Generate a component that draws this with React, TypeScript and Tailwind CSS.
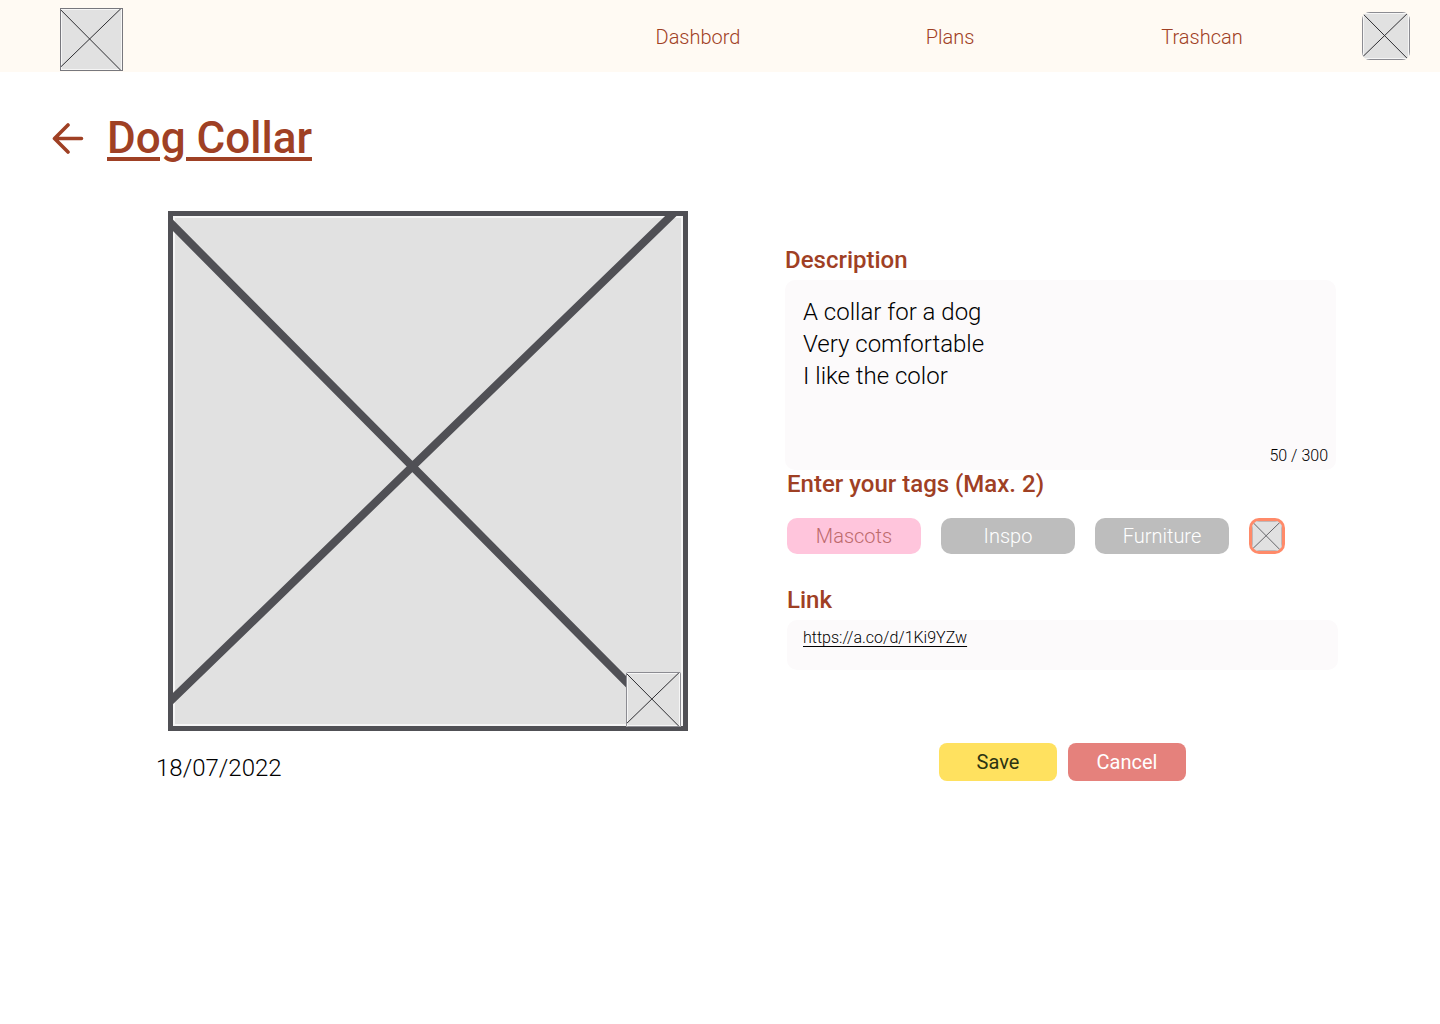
import { useState } from "react";

type CrossedBoxProps = {
  className?: string;
  frame: number;
  line: number;
  glow?: number;
  frameColor?: string;
  lineColor?: string;
};

function CrossedBox({
  className = "",
  frame,
  line,
  glow = 1,
  frameColor = "#505055",
  lineColor = "#505055",
}: CrossedBoxProps) {
  return (
    <svg viewBox="0 0 100 100" className={className} aria-hidden="true">
      <rect width="100" height="100" fill="#e1e1e1" />
      <rect
        width="100"
        height="100"
        fill="none"
        stroke="#f6f6f6"
        strokeWidth={(frame + glow) * 2}
        vectorEffect="non-scaling-stroke"
      />
      <path
        d="M0 1.8 L97 99.5 M0 94.7 L98 -0.3"
        stroke={lineColor}
        strokeWidth={line}
        vectorEffect="non-scaling-stroke"
      />
      <rect
        width="100"
        height="100"
        fill="none"
        stroke={frameColor}
        strokeWidth={frame * 2}
        vectorEffect="non-scaling-stroke"
      />
    </svg>
  );
}

const links = ["Dashbord", "Plans", "Trashcan"];
const tags = ["Mascots", "Inspo", "Furniture"];

export default function App() {
  const [description, setDescription] = useState(
    "A collar for a dog\nVery comfortable\nI like the color",
  );
  const [tag, setTag] = useState("Mascots");

  return (
    <div className="min-h-screen bg-white font-['Roboto',sans-serif] text-black">
      <header className="flex h-18 items-center bg-[#fffaf3] pr-[30px] pl-[60px]">
        <a href="#home" aria-label="Home" className="mt-[7px]">
          <CrossedBox
            className="size-[63px]"
            frame={1}
            line={1}
            frameColor="#77777d"
            lineColor="#2e2e32"
          />
        </a>
        <nav className="mr-[34px] ml-auto flex w-[56%] pt-0.5">
          {links.map((label) => (
            <a
              key={label}
              href={"#" + label.toLowerCase()}
              className="flex-1 text-center text-xl font-light text-[#9f4024]"
            >
              {label}
            </a>
          ))}
        </nav>
        <button type="button" aria-label="Profile" className="overflow-hidden rounded-lg">
          <CrossedBox
            className="size-12"
            frame={1}
            line={1}
            frameColor="#8c8c92"
            lineColor="#2e2e32"
          />
        </button>
      </header>

      <main>
        <div className="flex items-center gap-[23px] pt-9 pl-[52px]">
          <a href="#back" aria-label="Back" className="text-[#9f4024]">
            <svg
              viewBox="0 0 32 32"
              className="size-8"
              fill="none"
              stroke="currentColor"
              strokeWidth="3.6"
              strokeLinecap="round"
              strokeLinejoin="round"
              aria-hidden="true"
            >
              <path d="M29.5 16.5H3M16 3L2.5 16.5L16 30" />
            </svg>
          </a>
          <h1 className="text-[44px] leading-[60px] font-medium text-[#9f4024] underline decoration-4 underline-offset-4">
            Dog Collar
          </h1>
        </div>

        <div className="grid grid-cols-[532fr_553fr] gap-x-[97px] pt-[43px] pr-[102px] pl-[156px]">
          <section>
            <div className="relative ml-3">
              <CrossedBox className="aspect-square w-full" frame={5} line={8} glow={2} />
              <button
                type="button"
                aria-label="Change picture"
                className="absolute right-[7px] bottom-1 overflow-hidden rounded-xs"
              >
                <CrossedBox
                  className="size-[55px]"
                  frame={1}
                  line={1}
                  frameColor="#8c8c92"
                  lineColor="#2e2e32"
                />
              </button>
            </div>
            <p className="mt-[21px] text-2xl font-light">18/07/2022</p>
          </section>

          <form className="pt-[29px]" onSubmit={(e) => e.preventDefault()}>
            <label
              htmlFor="description"
              className="block text-2xl leading-10 font-medium text-[#9f4024]"
            >
              Description
            </label>
            <div className="relative mr-0.5">
              <textarea
                id="description"
                maxLength={300}
                value={description}
                onChange={(e) => setDescription(e.target.value)}
                className="block h-[190px] w-full resize-none rounded-[10px] bg-[#fcfafb] px-[18px] py-4 text-2xl font-light outline-none"
              />
              <span className="absolute right-2 bottom-0.5 text-base font-light">50 / 300</span>
            </div>

            <div className="pl-0.5">
              <h2 className="text-2xl leading-7 font-medium text-[#9f4024]">
                Enter your tags (Max. 2)
              </h2>
              <div className="mt-5 flex gap-5">
                {tags.map((name) => (
                  <button
                    key={name}
                    type="button"
                    aria-pressed={tag === name}
                    onClick={() => setTag(name)}
                    className={
                      tag === name
                        ? "h-9 w-[134px] rounded-[10px] bg-[#ffc5dc] text-xl font-light text-[#bd6a6c]"
                        : "h-9 w-[134px] rounded-[10px] bg-[#bdbdbd] text-xl font-light text-white"
                    }
                  >
                    {name}
                  </button>
                ))}
                <button
                  type="button"
                  aria-label="Add tag"
                  className="size-9 rounded-[10px] bg-[#ff8a69] p-[3px]"
                >
                  <CrossedBox
                    className="size-full rounded-[7px]"
                    frame={1}
                    line={1}
                    glow={0}
                    frameColor="#c0b8b8"
                    lineColor="#66666a"
                  />
                </button>
              </div>

              <h2 className="mt-[26px] text-2xl leading-10 font-medium text-[#9f4024]">Link</h2>
              <div className="h-[50px] rounded-[10px] bg-[#fcfafb] px-4 pt-1.5">
                <a
                  href="https://a.co/d/1Ki9YZw"
                  className="text-base font-light underline underline-offset-3"
                >
                  https://a.co/d/1Ki9YZw
                </a>
              </div>
            </div>

            <div className="mt-[73px] flex justify-center gap-[11px] pl-0.5">
              <button
                type="submit"
                className="h-[38px] w-[118px] rounded-lg bg-[#ffe15f] text-xl text-[#2c3312]"
              >
                Save
              </button>
              <button
                type="button"
                className="h-[38px] w-[118px] rounded-lg bg-[#e5817c] text-xl text-white"
              >
                Cancel
              </button>
            </div>
          </form>
        </div>
      </main>
    </div>
  );
}
